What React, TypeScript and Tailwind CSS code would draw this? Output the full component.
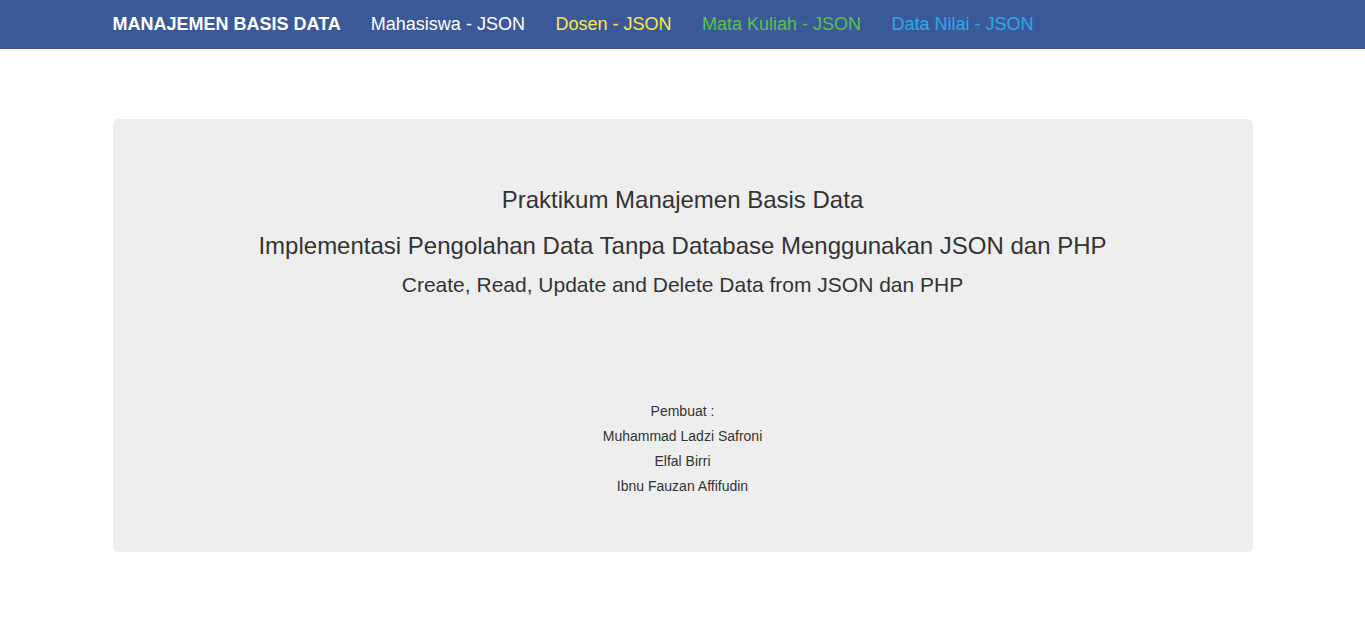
import React from "react";

export default function App() {
  return (
    <div className="min-h-[624px] bg-white font-['Liberation_Sans',Arial,sans-serif] text-[#333]">
      <nav className="h-[49px] bg-[#3b5998]">
        <div className="mx-auto flex h-full w-[1140px] items-center">
          <span className="text-[18px] font-bold text-white">MANAJEMEN BASIS DATA</span>
          <div className="ml-[30px] flex items-center gap-[30.5px] text-[18px]">
            <span className="text-white">Mahasiswa - JSON</span>
            <span className="text-[#fde84a]">Dosen - JSON</span>
            <span className="text-[#55c24e]">Mata Kuliah - JSON</span>
            <span className="text-[#2ea8e4]">Data Nilai - JSON</span>
          </div>
        </div>
      </nav>
      <div className="mx-auto mt-[70px] w-[1140px] rounded-[6px] bg-[#eeeeee] px-[60px] pt-[68px] pb-[53px] text-center">
        <h3 className="text-[24px] leading-[26px]">Praktikum Manajemen Basis Data</h3>
        <h3 className="mt-[20px] text-[24px] leading-[26px]">
          Implementasi Pengolahan Data Tanpa Database Menggunakan JSON dan PHP
        </h3>
        <h4 className="mt-[14px] text-[21px] leading-[23px]">
          Create, Read, Update and Delete Data from JSON dan PHP
        </h4>
        <div className="mt-[103px] text-[14px] leading-[25px]">
          <p>Pembuat :</p>
          <p>Muhammad Ladzi Safroni</p>
          <p>Elfal Birri</p>
          <p>Ibnu Fauzan Affifudin</p>
        </div>
      </div>
    </div>
  );
}
